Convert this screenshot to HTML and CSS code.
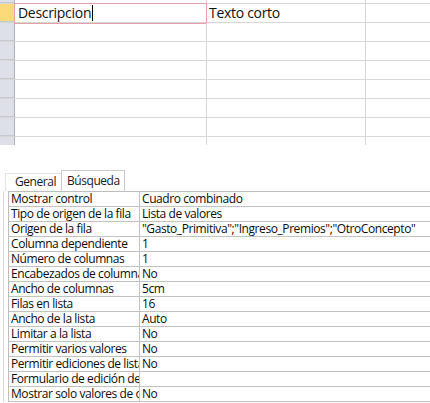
FILE: index.html
```html
<!DOCTYPE html>
<html lang="es">
<head>
<meta charset="utf-8">
<link rel="stylesheet" href="styles.css">
</head>
<body>
<div class="grid">
  <div class="row prev">
    <div class="sel"></div>
    <div class="c1"></div>
    <div class="c2"></div>
    <div class="c3"></div>
  </div>
  <div class="row">
    <div class="sel active-sel"></div>
    <div class="c1 active"><span class="txt">Descripcion</span><span class="caret"></span></div>
    <div class="c2"><span class="txt">Texto corto</span></div>
    <div class="c3"></div>
  </div>
  <div class="row"><div class="sel"></div><div class="c1"></div><div class="c2"></div><div class="c3"></div></div>
  <div class="row"><div class="sel"></div><div class="c1"></div><div class="c2"></div><div class="c3"></div></div>
  <div class="row"><div class="sel"></div><div class="c1"></div><div class="c2"></div><div class="c3"></div></div>
  <div class="row"><div class="sel"></div><div class="c1"></div><div class="c2"></div><div class="c3"></div></div>
  <div class="row"><div class="sel"></div><div class="c1"></div><div class="c2"></div><div class="c3"></div></div>
  <div class="row"><div class="sel"></div><div class="c1"></div><div class="c2"></div><div class="c3"></div></div>
  <div class="row last"><div class="sel"></div><div class="c1"></div><div class="c2"></div><div class="c3"></div></div>
</div>

<div class="panel">
  <div class="tabs">
    <div class="tab">General</div>
    <div class="tab on">Búsqueda</div>
  </div>
  <div class="frame">
    <div class="props">
      <div class="prow"><div class="pn">Mostrar control</div><div class="pv">Cuadro combinado</div></div>
      <div class="prow"><div class="pn">Tipo de origen de la fila</div><div class="pv">Lista de valores</div></div>
      <div class="prow"><div class="pn">Origen de la fila</div><div class="pv">"Gasto_Primitiva";"Ingreso_Premios";"OtroConcepto"</div></div>
      <div class="prow"><div class="pn">Columna dependiente</div><div class="pv">1</div></div>
      <div class="prow"><div class="pn">Número de columnas</div><div class="pv">1</div></div>
      <div class="prow"><div class="pn">Encabezados de columna</div><div class="pv">No</div></div>
      <div class="prow"><div class="pn">Ancho de columnas</div><div class="pv">5cm</div></div>
      <div class="prow"><div class="pn">Filas en lista</div><div class="pv">16</div></div>
      <div class="prow"><div class="pn">Ancho de la lista</div><div class="pv">Auto</div></div>
      <div class="prow"><div class="pn">Limitar a la lista</div><div class="pv">No</div></div>
      <div class="prow"><div class="pn">Permitir varios valores</div><div class="pv">No</div></div>
      <div class="prow"><div class="pn">Permitir ediciones de lista</div><div class="pv">No</div></div>
      <div class="prow"><div class="pn">Formulario de edición de elementos de lista</div><div class="pv"></div></div>
      <div class="prow"><div class="pn">Mostrar solo valores de origen de la fila</div><div class="pv">No</div></div>
    </div>
  </div>
</div>
</body>
</html>
```

FILE: styles.css
```css
html, body {
  margin: 0;
  padding: 0;
  background: #ffffff;
  overflow: hidden;
}
body {
  width: 430px;
  height: 403px;
  font-family: "Open Sans", "Noto Sans", sans-serif;
  color: #111;
}

/* ---------- top datasheet grid ---------- */
.grid {
  height: 145px;
  overflow: hidden;
  display: flex;
  flex-direction: column;
}
.row {
  display: flex;
  height: 18px;
  flex: 0 0 18px;
  border-bottom: 1px solid #d6d6d6;
}
.row.prev {
  height: 3px;
  flex: 0 0 3px;
}
.row.last {
  border-bottom: none;
}
.sel {
  width: 14px;
  flex: 0 0 14px;
  background: #dde1e7;
  border-right: 1px solid #aeb3ba;
}
.row .sel {
  box-shadow: inset 0 -1px 0 #c6cad0;
}
.active-sel {
  background: #fcd979;
}
.c1 {
  width: 191px;
  flex: 0 0 191px;
  border-right: 1px solid #d6d6d6;
  position: relative;
  display: flex;
  align-items: center;
}
.c2 {
  width: 158px;
  flex: 0 0 158px;
  border-right: 1px solid #d6d6d6;
  display: flex;
  align-items: center;
}
.c3 {
  flex: 1;
}
.txt {
  font-size: 14px;
  line-height: 18px;
  white-space: nowrap;
  color: #111;
  letter-spacing: -0.3px;
}
.c1 .txt { padding-left: 3px; }
.c2 .txt { padding-left: 2px; }
.active::after {
  content: "";
  position: absolute;
  left: -1px;
  top: -1px;
  right: -1px;
  bottom: -2px;
  border: 1px solid #e3a2aa;
  pointer-events: none;
}
.caret {
  display: inline-block;
  width: 1px;
  height: 16px;
  background: #000;
  margin-left: 1px;
}

/* ---------- property sheet ---------- */
.panel {
  margin-top: 25px;
}
.tabs {
  display: flex;
  align-items: flex-end;
  height: 21px;
  padding-left: 5px;
}
.tab {
  font-size: 12px;
  line-height: 16px;
  padding: 0 5px 0 9px;
  height: 17px;
  border: 1px solid #e2e2e2;
  border-bottom: none;
  border-right: none;
  color: #1a1a1a;
  letter-spacing: -0.45px;
}
.tab.on {
  height: 20px;
  line-height: 20px;
  padding: 0 4px 0 5px;
  border: 1px solid #c9c9c9;
  border-bottom: none;
  background: #fff;
}
.frame {
  margin-left: 3px;
  border-left: 1px solid #dadada;
  padding-left: 4px;
}
.props {
  border-top: 1px solid #bdbdbd;
  border-left: 1px solid #bdbdbd;
}
.prow {
  display: flex;
  height: 14px;
  border-bottom: 1px solid #c2c2c2;
  font-size: 12px;
  line-height: 14px;
  letter-spacing: -0.42px;
  color: #0d0d0d;
}
.pn {
  width: 128px;
  flex: 0 0 128px;
  padding-left: 2px;
  border-right: 1px solid #c2c2c2;
  white-space: nowrap;
  overflow-x: clip;
  overflow-y: visible;
}
.pv {
  flex: 1;
  padding-left: 2px;
  white-space: nowrap;
  overflow-x: clip;
  overflow-y: visible;
}
```
